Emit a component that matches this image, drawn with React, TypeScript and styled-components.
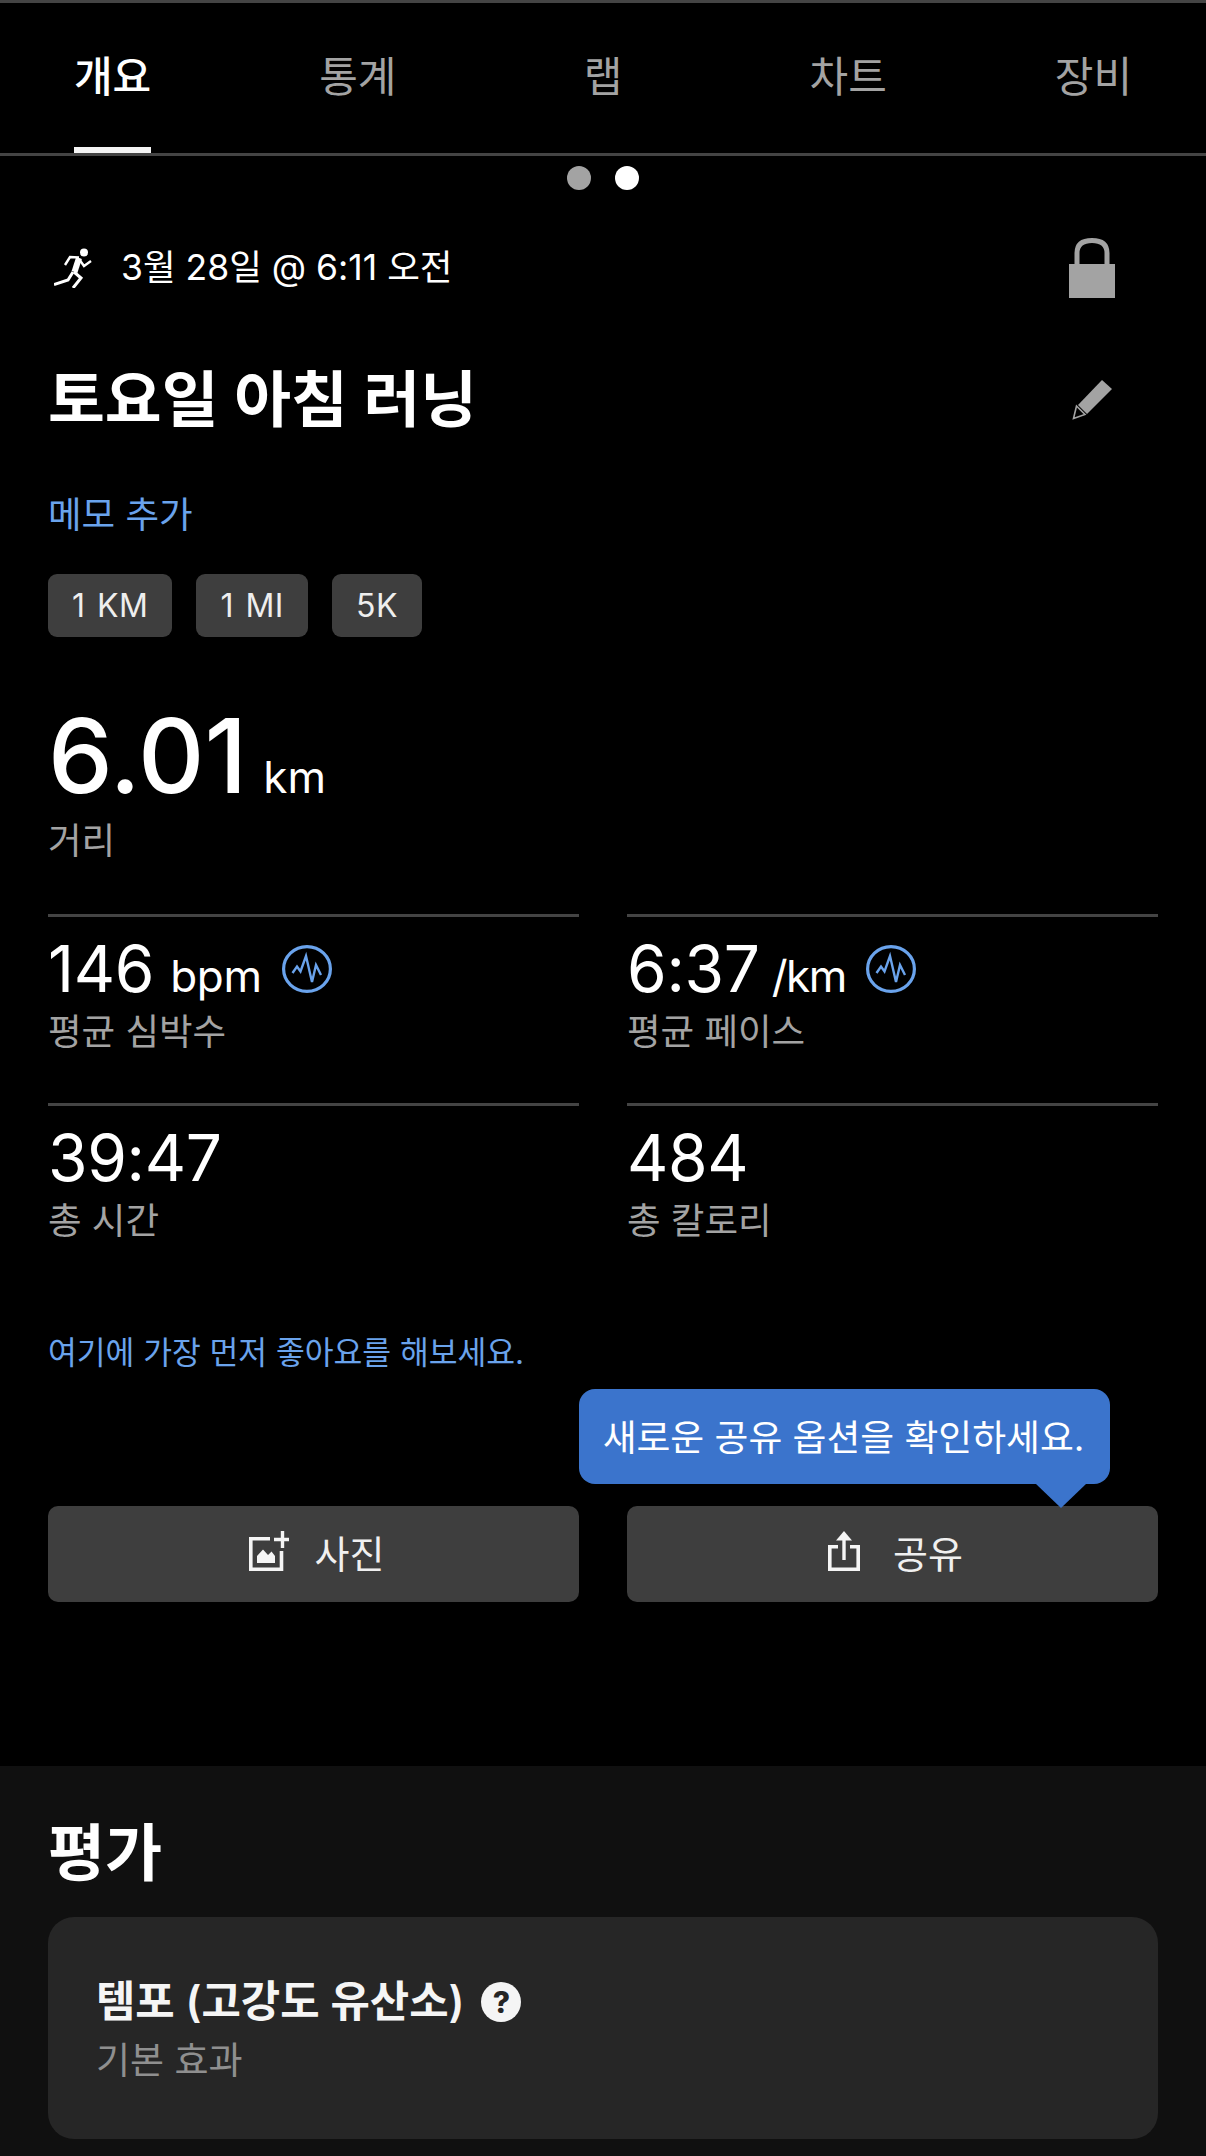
import React from 'react';
import styled, {createGlobalStyle} from 'styled-components';

const tabs = ['개요', '통계', '랩', '차트', '장비'];

const stats = [
  {value: '146', unit: 'bpm', label: '평균 심박수', pulse: true},
  {value: '6:37', unit: '/km', label: '평균 페이스', pulse: true, narrow: true},
  {value: '39:47', label: '총 시간'},
  {value: '484', label: '총 칼로리'},
];

const RunnerIcon = () => (
  <svg width="38" height="40" viewBox="0 0 38 40" fill="none" stroke="#fff" strokeLinejoin="miter">
    <circle cx="30" cy="4.5" r="4" fill="#fff" stroke="none" />
    <path d="M25 10 L20.5 24" strokeWidth="6" />
    <path d="M25 11 L30 18 L37 13" strokeWidth="2.4" />
    <path d="M25 9.5 L16 9 L11 17" strokeWidth="2.4" />
    <path d="M20 24 L27 30 L19 40" strokeWidth="3" />
    <path d="M19 24 L14 32 L0 36.5" strokeWidth="3" />
  </svg>
);

const LockIcon = () => (
  <svg width="46" height="60" viewBox="0 0 46 60" fill="#a3a3a3">
    <rect x="0" y="26" width="46" height="34" />
    <path d="M8 27 V15 C8 6 14 2.5 23 2.5 C32 2.5 38 6 38 15 V27" fill="none" stroke="#a3a3a3" strokeWidth="5" />
  </svg>
);

const PencilIcon = () => (
  <svg width="40" height="40" viewBox="0 0 40 40">
    <path d="M30 0 L40 9 L15 34 L6 25 Z" fill="#a3a3a3" />
    <path d="M4.5 26 L13 34.5 L1.5 38.5 Z" fill="none" stroke="#a3a3a3" strokeWidth="1.6" />
  </svg>
);

const PulseIcon = () => (
  <svg width="50" height="48" viewBox="0 0 50 48" fill="none" stroke="#6aa3ec">
    <ellipse cx="25" cy="24" rx="23.4" ry="22.4" strokeWidth="3.2" />
    <path d="M10.5 28 L15 21.5 L18.5 26.5 L24 11 L30 37 L34 20 L39 30" strokeWidth="2.4" />
  </svg>
);

const PhotoAddIcon = () => (
  <svg width="40" height="40" viewBox="0 0 40 40" fill="none" stroke="#f5f5f5">
    <path d="M21 7.8 H1.8 V38.2 H32.5 V20" strokeWidth="3.6" />
    <path d="M33.5 0 V17 M25 8.5 H40" strokeWidth="3.4" />
    <path d="M8 32 V25 L14 18.5 L19 24 L22.5 20.5 L26 25 V32 Z" fill="#f5f5f5" stroke="none" />
  </svg>
);

const ShareIcon = () => (
  <svg width="32" height="40" viewBox="0 0 32 40" fill="none" stroke="#f5f5f5">
    <path d="M10 15.8 H1.8 V38.2 H30.2 V15.8 H22" strokeWidth="3.6" />
    <path d="M16 4 V29" strokeWidth="3.4" />
    <path d="M16 0 L24 9.5 H8 Z" fill="#f5f5f5" stroke="none" />
  </svg>
);

const App: React.FC = () => {
  return (
    <>
      <GlobalStyle />
      <Page>
        <TabBar>
          {tabs.map((tab, i) => (
            <Tab key={tab}>
              <TabLabel $active={i === 0}>{tab}</TabLabel>
            </Tab>
          ))}
        </TabBar>
        <Activity>
          <Dots>
            <Dot />
            <Dot $active />
          </Dots>
          <MetaRow>
            <MetaLeft>
              <RunnerIcon />
              <MetaText>3월 28일 @ 6:11 오전</MetaText>
            </MetaLeft>
            <LockIcon />
          </MetaRow>
          <TitleRow>
            <Title>토요일 아침 러닝</Title>
            <PencilIcon />
          </TitleRow>
          <MemoLink>메모 추가</MemoLink>
          <Chips>
            <Chip>1 KM</Chip>
            <Chip>1 MI</Chip>
            <Chip>5K</Chip>
          </Chips>
          <Distance>
            <DistanceValue>6.01</DistanceValue>
            <DistanceUnit>km</DistanceUnit>
          </Distance>
          <Label>거리</Label>
          <StatGrid>
            {stats.map(({value, unit, label, pulse, narrow}) => (
              <Stat key={label}>
                <StatValueRow>
                  <StatValue>{value}</StatValue>
                  {unit && <StatUnit $narrow={narrow}>{unit}</StatUnit>}
                  {pulse && (
                    <PulseSlot>
                      <PulseIcon />
                    </PulseSlot>
                  )}
                </StatValueRow>
                <StatLabel>{label}</StatLabel>
              </Stat>
            ))}
          </StatGrid>
          <LikeLink>여기에 가장 먼저 좋아요를 해보세요.</LikeLink>
          <Actions>
            <ActionButton $gap={26}>
              <PhotoAddIcon />
              사진
            </ActionButton>
            <ActionButton $gap={33}>
              <ShareIcon />
              공유
            </ActionButton>
            <Tooltip>새로운 공유 옵션을 확인하세요.</Tooltip>
          </Actions>
        </Activity>
        <Review>
          <ReviewTitle>평가</ReviewTitle>
          <ReviewCard>
            <ReviewHeading>
              템포 (고강도 유산소)
              <HelpBadge>?</HelpBadge>
            </ReviewHeading>
            <ReviewSub>기본 효과</ReviewSub>
          </ReviewCard>
        </Review>
      </Page>
    </>
  );
};

export default App;

const GlobalStyle = createGlobalStyle`
  html, body {
    margin: 0;
    padding: 0;
    background: #000;
  }
  * {
    box-sizing: border-box;
  }
`;

const Page = styled.div`
  width: 1206px;
  height: 2156px;
  overflow: hidden;
  background: #000;
  color: #fff;
  font-family: Inter, 'Noto Sans CJK KR', sans-serif;
`;

const TabBar = styled.div`
  height: 156px;
  margin: 0 -10px;
  padding: 0;
  display: grid;
  grid-template-columns: repeat(5, 1fr);
  border-top: 3px solid #444;
  border-bottom: 3px solid #444;
`;

const Tab = styled.div`
  display: flex;
  justify-content: center;
`;

const TabLabel = styled.span<{$active?: boolean}>`
  height: 150px;
  padding-top: 48px;
  font-size: 42px;
  line-height: 52px;
  color: ${({$active}) => ($active ? '#fff' : '#a3a3a3')};
  font-weight: ${({$active}) => ($active ? 500 : 400)};
  border-bottom: 6px solid ${({$active}) => ($active ? '#f5f5f5' : 'transparent')};
`;

const Activity = styled.div`
  height: 1610px;
  padding: 10px 48px 0;
`;

const Dots = styled.div`
  display: flex;
  justify-content: center;
  gap: 24px;
`;

const Dot = styled.span<{$active?: boolean}>`
  width: 24px;
  height: 24px;
  border-radius: 50%;
  background: ${({$active}) => ($active ? '#fff' : '#a3a3a3')};
`;

const MetaRow = styled.div`
  margin-top: 48px;
  padding: 0 43px 0 6px;
  display: flex;
  align-items: center;
  justify-content: space-between;
`;

const MetaLeft = styled.div`
  display: flex;
  align-items: center;
  gap: 29px;
`;

const MetaText = styled.span`
  font-size: 35.5px;
  line-height: 44px;
`;

const TitleRow = styled.div`
  margin-top: 72px;
  height: 60px;
  padding-right: 46px;
  display: flex;
  align-items: center;
  justify-content: space-between;
`;

const Title = styled.h1`
  margin: 0;
  font-size: 61.8px;
  line-height: 60px;
  font-weight: 600;
`;

const MemoLink = styled.div`
  margin-top: 60px;
  font-size: 36.5px;
  line-height: 50px;
  color: #6aa3ec;
`;

const Chips = styled.div`
  margin-top: 34px;
  display: flex;
  gap: 24px;
`;

const Chip = styled.div`
  height: 63px;
  padding: 0 24px;
  display: flex;
  align-items: center;
  border-radius: 9px;
  background: #3e3e3e;
  font-size: 32px;
  letter-spacing: 0.5px;
  word-spacing: 2px;
  color: #eee;
`;

const Distance = styled.div`
  margin-top: 64px;
  display: flex;
  align-items: baseline;
  gap: 16px;
  height: 118px;
  line-height: 110px;
`;

const DistanceValue = styled.span`
  font-size: 103px;
  font-weight: 500;
`;

const DistanceUnit = styled.span`
  font-size: 44px;
`;

const Label = styled.div`
  font-size: 36.5px;
  line-height: 44px;
  color: #a3a3a3;
`;

const StatGrid = styled.div`
  margin-top: 51px;
  display: grid;
  grid-template-columns: 1fr 1fr;
  gap: 0 48px;
`;

const Stat = styled.div`
  height: 189px;
  padding-top: 17px;
  border-top: 3px solid #444;
`;

const StatValueRow = styled.div`
  display: flex;
  align-items: baseline;
  height: 70px;
  line-height: 70px;
`;

const StatValue = styled.span`
  font-size: 64px;
  letter-spacing: -0.3px;
`;

const StatUnit = styled.span<{$narrow?: boolean}>`
  margin-left: ${({$narrow}) => ($narrow ? 12 : 16)}px;
  font-size: 44px;
  letter-spacing: ${({$narrow}) => ($narrow ? -1.5 : -0.3)}px;
`;

const StatLabel = styled(Label)`
  margin-top: 6px;
`;

const PulseSlot = styled.span`
  margin-left: 20px;
  align-self: center;
  display: flex;
`;

const LikeLink = styled.div`
  margin-top: 36px;
  font-size: 31.3px;
  line-height: 50px;
  color: #6aa3ec;
`;

const Actions = styled.div`
  position: relative;
  margin-top: 128px;
  display: grid;
  grid-template-columns: 1fr 1fr;
  gap: 48px;
`;

const ActionButton = styled.div<{$gap: number}>`
  height: 96px;
  padding: 0 0 6px 6px;
  display: flex;
  align-items: center;
  justify-content: center;
  gap: ${({$gap}) => $gap}px;
  border-radius: 10px;
  background: #3e3e3e;
  font-size: 38px;
  color: #f0f0f0;
`;

const Tooltip = styled.div`
  position: absolute;
  left: 531px;
  bottom: 118px;
  width: 531px;
  height: 95px;
  padding: 0 2px 4px 0;
  display: flex;
  align-items: center;
  justify-content: center;
  border-radius: 16px;
  background: #3b74cc;
  font-size: 36.8px;
  white-space: nowrap;
  &::after {
    content: '';
    position: absolute;
    left: 457px;
    top: 95px;
    border-left: 25px solid transparent;
    border-right: 25px solid transparent;
    border-top: 24px solid #3b74cc;
  }
`;

const Review = styled.div`
  height: 390px;
  padding: 48px 48px 0;
  background: #101010;
`;

const ReviewTitle = styled.h2`
  margin: 0;
  font-size: 62px;
  line-height: 80px;
  font-weight: 600;
`;

const ReviewCard = styled.div`
  margin-top: 23px;
  height: 222px;
  padding: 56px 48px 0;
  border-radius: 26px;
  background: #262626;
`;

const ReviewHeading = styled.div`
  display: flex;
  align-items: center;
  gap: 17px;
  font-size: 42.8px;
  line-height: 58px;
  font-weight: 600;
  color: #f5f5f5;
`;

const HelpBadge = styled.span`
  width: 40px;
  height: 40px;
  display: flex;
  align-items: center;
  justify-content: center;
  border-radius: 50%;
  background: #f5f5f5;
  color: #262626;
  font-size: 30px;
  font-weight: 800;
`;

const ReviewSub = styled.div`
  margin-top: 8px;
  font-size: 37px;
  line-height: 44px;
  color: #8f8f8f;
`;
